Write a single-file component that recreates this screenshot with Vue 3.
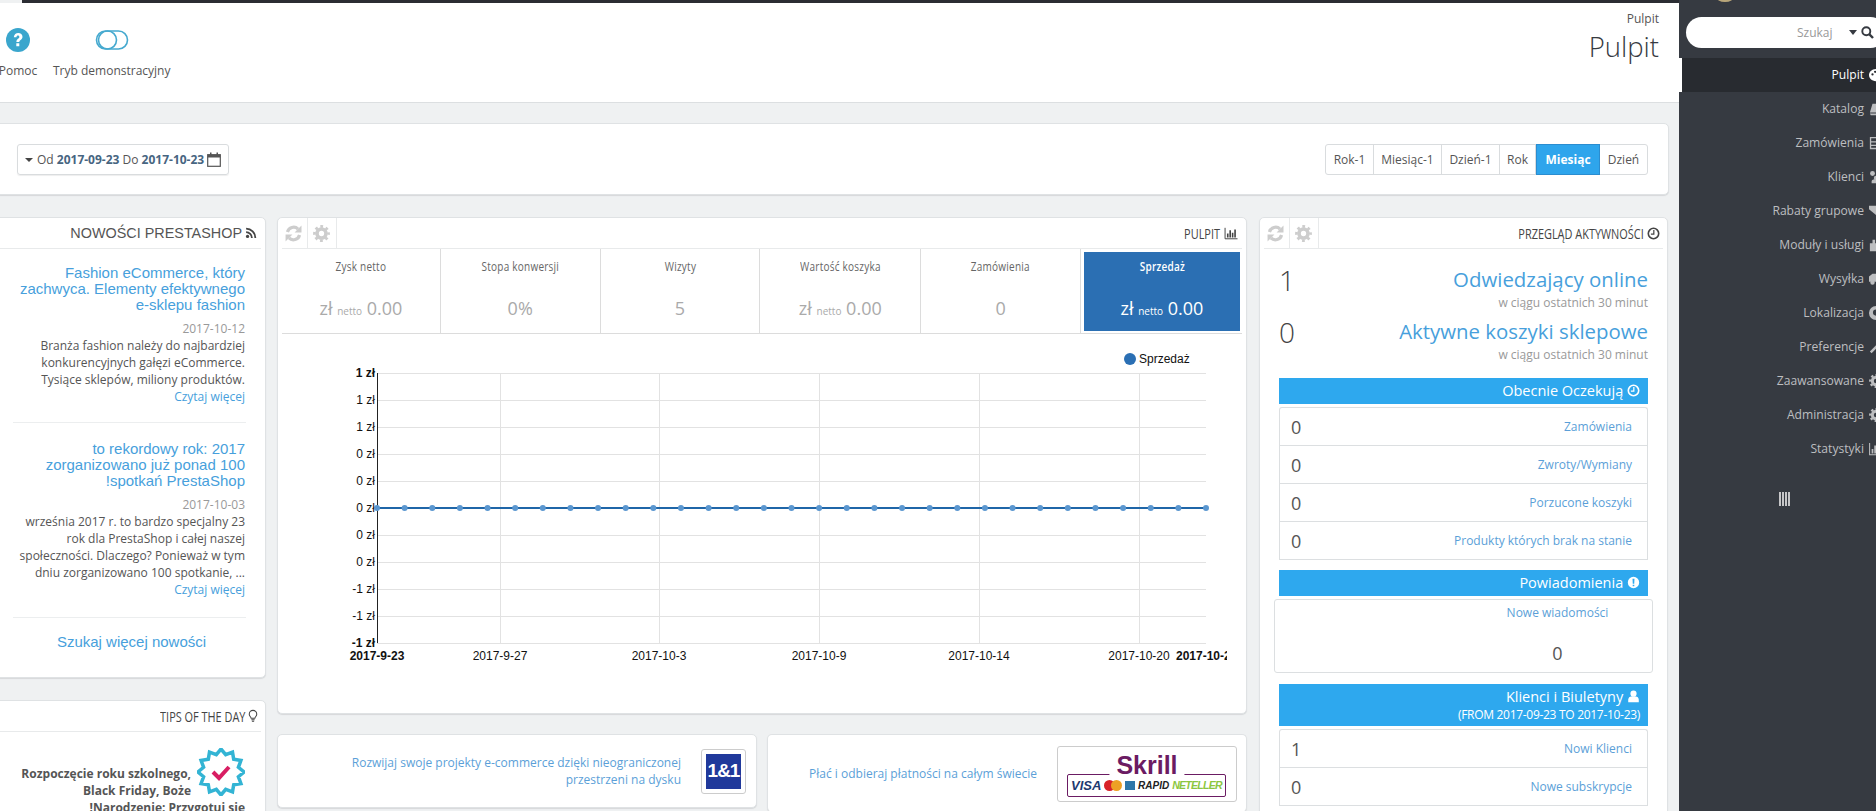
<script setup>
const menu = [
  ['Pulpit', 'i-palette', true], ['Katalog', 'i-book'], ['Zamówienia', 'i-inbox'], ['Klienci', 'i-users'],
  ['Rabaty grupowe', 'i-tag'], ['Moduły i usługi', 'i-puzzle'], ['Wysyłka', 'i-truck'], ['Lokalizacja', 'i-globe'],
  ['Preferencje', 'i-wrench'], ['Zaawansowane', 'i-cog'], ['Administracja', 'i-cog'], ['Statystyki', 'i-chart']
]
const ranges = [['Rok-1', 48], ['Miesiąc-1', 68], ['Dzień-1', 58], ['Rok', 36], ['Miesiąc', 64, true], ['Dzień', 47]]
const kpis = [
  { label: 'Zysk netto', money: true, w: 159 },
  { label: 'Stopa konwersji', value: '0%', w: 160 },
  { label: 'Wizyty', value: '5', w: 160 },
  { label: 'Wartość koszyka', money: true, w: 161 },
  { label: 'Zamówienia', value: '0', w: 160 },
  { label: 'Sprzedaż', money: true, active: true, w: 161 }
]
const pending = [['0', 'Zamówienia'], ['0', 'Zwroty/Wymiany'], ['0', 'Porzucone koszyki'], ['0', 'Produkty których brak na stanie']]
const customers = [['1', 'Nowi Klienci'], ['0', 'Nowe subskrypcje']]

const ox = 282
const oy = 333
const top = 372 - oy
const bottom = 642 - oy
const left = 377 - ox
const right = 1206 - ox
const yLabels = ['1 zł', '1 zł', '1 zł', '0 zł', '0 zł', '0 zł', '0 zł', '0 zł', '-1 zł', '-1 zł', '-1 zł'].map((t, i) => ({
  t, y: top + i * 27, bold: i === 0 || i === 10
}))
const xLabels = [
  { t: '2017-9-23', x: 377 - ox, bold: true },
  { t: '2017-9-27', x: 500 - ox },
  { t: '2017-10-3', x: 659 - ox },
  { t: '2017-10-9', x: 819 - ox },
  { t: '2017-10-14', x: 979 - ox },
  { t: '2017-10-20', x: 1139 - ox }
]
const vLines = [500, 659, 819, 979, 1139].map(x => x - ox)
const dots = Array.from({ length: 31 }, (_, i) => left + (i * (right - left)) / 30)

const star = Array.from({ length: 24 }, (_, i) => {
  const a = (i * Math.PI) / 12 - Math.PI / 2
  const r = i % 2 ? 18 : 23
  return `${(24 + r * Math.cos(a)).toFixed(1)},${(24 + r * Math.sin(a)).toFixed(1)}`
}).join(' ')
</script>

<template>
  <div class="app">
    <svg class="defs" width="0" height="0" aria-hidden="true">
      <symbol id="i-refresh" viewBox="0 0 16 16">
        <path d="M2.300 6.600A6 6 0 0 1 12.300 3.800" fill="none" stroke="currentColor" stroke-width="3" />
        <path d="M15.500 0.500V7H9z" fill="currentColor" />
        <path d="M13.700 9.400A6 6 0 0 1 3.700 12.200" fill="none" stroke="currentColor" stroke-width="3" />
        <path d="M.5 15.500V9H7z" fill="currentColor" />
      </symbol>
      <symbol id="i-gear" viewBox="0 0 16 16">
        <circle cx="8" cy="8" r="4.200" fill="none" stroke="currentColor" stroke-width="3.400" />
        <circle cx="8" cy="8" r="6.600" fill="none" stroke="currentColor" stroke-width="2.600" stroke-dasharray="2.600 2.580" stroke-dashoffset="1.300" />
      </symbol>
      <symbol id="i-clock" viewBox="0 0 16 16">
        <circle cx="8" cy="8" r="6.400" fill="none" stroke="currentColor" stroke-width="2" />
        <path d="M8.400 3.800V8.800H4.800" fill="none" stroke="currentColor" stroke-width="1.500" />
      </symbol>
      <symbol id="i-rss" viewBox="0 0 16 16">
        <circle cx="3.400" cy="12.600" r="2.200" fill="currentColor" />
        <path d="M1.500 6.800A7.800 7.800 0 0 1 9.200 14.600M1.500 2.200A12.400 12.400 0 0 1 13.800 14.600" fill="none" stroke="currentColor" stroke-width="2.400" />
      </symbol>
      <symbol id="i-chart" viewBox="0 0 16 16">
        <path d="M.7 1V14.500H16" fill="none" stroke="currentColor" stroke-width="1.200" />
        <path d="M3 8h2v5H3zM6 4h2v9H6zM9 7h2v6H9zM12 3h2v10h-2z" fill="currentColor" />
      </symbol>
      <symbol id="i-bulb" viewBox="0 0 16 16">
        <path d="M5.500 11C5 8.800 3 8 3 5.500A5 5 0 0 1 13 5.500C13 8 11 8.800 10.500 11z" fill="none" stroke="currentColor" stroke-width="1.400" />
        <path d="M5.800 12.200h4.400v1.300H5.800zM6.500 14.200h3v1.500h-3z" fill="currentColor" />
      </symbol>
      <symbol id="i-alert" viewBox="0 0 16 16">
        <path fill-rule="evenodd" d="M8 1a7 7 0 1 1 0 14A7 7 0 0 1 8 1zM6.800 3.500l.3 6h1.800l.3-6zM7 10.800v1.800h2v-1.800z" fill="currentColor" />
      </symbol>
      <symbol id="i-user" viewBox="0 0 16 16">
        <circle cx="8" cy="4.500" r="3.800" fill="currentColor" />
        <path d="M1.500 15V12C1.500 9.500 3.500 8 5 8H11C12.500 8 14.500 9.500 14.500 12V15z" fill="currentColor" />
      </symbol>
      <symbol id="i-palette" viewBox="0 0 16 16">
        <path fill-rule="evenodd" d="M8 1C3 1 0 4.500 0 8s3 7 8 7c2 0 1.500-2 1.500-3S11 10 13 10s3-.5 3-3c0-3-3.500-6-8-6zM4 6a1.300 1.300 0 1 1 0 2.600A1.300 1.300 0 0 1 4 6zm3-3a1.300 1.300 0 1 1 0 2.600A1.300 1.300 0 0 1 7 3z" fill="currentColor" />
      </symbol>
      <symbol id="i-book" viewBox="0 0 16 16"><path d="M4 2h11l-3 10H1zM1 13h11v2H2z" fill="currentColor" /></symbol>
      <symbol id="i-inbox" viewBox="0 0 16 16"><path fill-rule="evenodd" d="M1 1h14v14H1zM2.500 2.500V6h11V2.500zM2.500 7.500V10h11V7.500zM2.500 11.500v2h11v-2z" fill="currentColor" /></symbol>
      <symbol id="i-users" viewBox="0 0 16 16">
        <circle cx="4" cy="4" r="2.800" fill="currentColor" /><circle cx="11" cy="4.500" r="2.800" fill="currentColor" /><circle cx="8" cy="9" r="2.500" fill="currentColor" />
        <path d="M3 15v-2c0-2 2-2.500 5-2.500s5 .5 5 2.500v2z" fill="currentColor" />
      </symbol>
      <symbol id="i-tag" viewBox="0 0 16 16"><path d="M0 2h8l8 8-5 5-11-9z" fill="currentColor" /></symbol>
      <symbol id="i-puzzle" viewBox="0 0 16 16"><path d="M1 6h3V2h3v4h2V2h3v4h3v9H1z" fill="currentColor" /></symbol>
      <symbol id="i-truck" viewBox="0 0 16 16"><path d="M0 5l4-3h8v9H0z" fill="currentColor" /><circle cx="4" cy="12" r="2.500" fill="currentColor" /><circle cx="11" cy="12" r="2.500" fill="currentColor" /></symbol>
      <symbol id="i-globe" viewBox="0 0 16 16"><path fill-rule="evenodd" d="M8 0a8 8 0 1 1 0 16A8 8 0 0 1 8 0zm0 4a3.500 3.500 0 1 0 0 7 3.500 3.500 0 0 0 0-7z" fill="currentColor" /></symbol>
      <symbol id="i-wrench" viewBox="0 0 16 16"><path d="M1 13l7-7 2 2-7 7zM8 5l3-4 4 1-3 2 1 2 2-1-1 3-4 1z" fill="currentColor" /></symbol>
      <symbol id="i-cog" viewBox="0 0 16 16">
        <circle cx="8" cy="8" r="4.200" fill="none" stroke="currentColor" stroke-width="3.400" />
        <circle cx="8" cy="8" r="6.600" fill="none" stroke="currentColor" stroke-width="2.600" stroke-dasharray="2.600 2.580" stroke-dashoffset="1.300" />
      </symbol>
    </svg>

    <main class="main">
      <div class="topline"></div>
      <header class="page-head">
        <div class="head-tools">
          <div class="tool tool-help">
            <svg width="24" height="24" viewBox="0 0 24 24">
              <circle cx="12" cy="12" r="12" fill="#3aa6cd" />
              <path d="M7.800 9.200C8 6.500 10 5 12.200 5c2.500 0 4.300 1.600 4.300 3.800 0 3-3.200 3.200-3.200 5.200H10.400c0-3.300 3-3.400 3-5 0-.9-.6-1.500-1.400-1.500-1 0-1.400.7-1.600 1.700zM10.300 15.200h3v3h-3z" fill="#fff" />
            </svg>
            <span>Pomoc</span>
          </div>
          <div class="tool">
            <svg width="34" height="24" viewBox="0 0 34 24">
              <rect x="1.500" y="3" width="31" height="18" rx="9" fill="none" stroke="#45a9cf" stroke-width="1.600" />
              <circle cx="12.500" cy="12" r="9" fill="none" stroke="#45a9cf" stroke-width="1.600" />
            </svg>
            <span>Tryb demonstracyjny</span>
          </div>
        </div>
        <div class="head-title">
          <div class="crumb">Pulpit</div>
          <h1>Pulpit</h1>
        </div>
      </header>

      <section class="panel toolbar">
        <div class="date-btn">
          <span class="caret"></span>
          <span>Od <b>2017-09-23</b> Do <b>2017-10-23</b></span>
          <svg width="14" height="15" viewBox="0 0 14 15">
            <rect x=".7" y="2.700" width="12.600" height="11.600" fill="none" stroke="#555" stroke-width="1.200" />
            <path d="M.7 2.700h12.600v2.800H.7zM3 .5h1.500v3H3zM9.500 .5H11v3H9.500z" fill="#555" />
          </svg>
        </div>
        <div class="range">
          <span v-for="r in ranges" :key="r[0]" class="range-item" :class="{ on: r[2] }" :style="{ width: r[1] + 'px' }">{{ r[0] }}</span>
        </div>
      </section>

      <div class="columns">
        <div class="col-left">
          <section class="panel news">
            <div class="panel-head head-arial">
              <span>NOWOŚCI PRESTASHOP</span>
              <svg class="hi" width="12" height="12"><use href="#i-rss" /></svg>
            </div>
            <article class="story">
              <h4>Fashion eCommerce, który<br />zachwyca. Elementy efektywnego<br />e-sklepu fashion</h4>
              <div class="story-date">2017-10-12</div>
              <p>Branża fashion należy do najbardziej<br />konkurencyjnych gałęzi eCommerce.<br />Tysiące sklepów, miliony produktów.</p>
              <a class="more">Czytaj więcej</a>
            </article>
            <article class="story">
              <h4>to rekordowy rok: 2017<br />zorganizowano już ponad 100<br />!spotkań PrestaShop</h4>
              <div class="story-date">2017-10-03</div>
              <p>września 2017 r. to bardzo specjalny 23<br />rok dla PrestaShop i całej naszej<br />społeczności. Dlaczego? Ponieważ w tym<br />dniu zorganizowano 100 spotkanie, ...</p>
              <a class="more">Czytaj więcej</a>
            </article>
            <a class="more-news">Szukaj więcej nowości</a>
          </section>

          <section class="panel tips">
            <div class="panel-head tips-head">
              <span class="cond">TIPS OF THE DAY</span>
              <svg class="hi tight" width="12" height="14"><use href="#i-bulb" /></svg>
            </div>
            <div class="tip-body">
              <svg class="badge" width="48" height="48" viewBox="0 0 48 48">
                <polygon :points="star" fill="#fff" stroke="#33b4d4" stroke-width="3.500" />
                <path d="M16 24l6 6 10-11" fill="none" stroke="#d81e63" stroke-width="4" />
              </svg>
              <p>Rozpoczęcie roku szkolnego,<br />Black Friday, Boże<br />!Narodzenie: Przygotuj się</p>
            </div>
          </section>
        </div>

        <div class="col-center">
          <section class="panel dash">
            <div class="panel-head with-tools">
              <span class="head-btn"><svg width="17" height="17"><use href="#i-refresh" /></svg></span>
              <span class="head-btn wide"><svg width="17" height="17"><use href="#i-gear" /></svg></span>
              <span class="head-space"></span>
              <span class="cond">PULPIT</span>
              <svg class="hi" width="16" height="13"><use href="#i-chart" /></svg>
            </div>
            <div class="kpis">
              <div v-for="k in kpis" :key="k.label" class="kpi" :class="{ active: k.active }" :style="{ width: k.w + 'px' }">
                <div class="kpi-label"><span class="cond-c">{{ k.label }}</span></div>
                <div class="kpi-value">
                  <template v-if="k.money">zł <small>netto</small> 0.00</template>
                  <template v-else>{{ k.value }}</template>
                </div>
              </div>
            </div>
            <svg class="chart" width="945" height="360" viewBox="0 0 945 360">
              <g stroke="#e2e2e2" stroke-width="1">
                <line v-for="l in yLabels" :key="l.y" :x1="left" :x2="right" :y1="l.y + .5" :y2="l.y + .5" />
                <line v-for="x in vLines" :key="x" :x1="x + .5" :x2="x + .5" :y1="top" :y2="bottom" />
              </g>
              <line :x1="left + .5" :x2="left + .5" :y1="top" :y2="bottom" stroke="#222" />
              <text v-for="(l, i) in yLabels" :key="'y' + i" class="axis" :class="{ bold: l.bold }" x="93" :y="l.y + 4" text-anchor="end">{{ l.t }}</text>
              <text v-for="l in xLabels" :key="l.t" class="axis" :class="{ bold: l.bold }" :x="l.x" :y="bottom + 17" text-anchor="middle">{{ l.t }}</text>
              <text class="axis bold" x="894" :y="bottom + 17">2017-10-23</text>
              <line :x1="left" :x2="right" :y1="(top + bottom) / 2" :y2="(top + bottom) / 2" stroke="#1f66a8" stroke-width="2" />
              <circle v-for="x in dots" :key="x" :cx="x" :cy="(top + bottom) / 2" r="3" fill="#5b97d0" />
              <circle cx="848" cy="25" r="6" fill="#2a6fb4" />
              <text class="axis" x="857" y="29">Sprzedaż</text>
            </svg>
          </section>

          <div class="promos">
            <section class="panel promo">
              <a>Rozwijaj swoje projekty e-commerce dzięki nieograniczonej<br />przestrzeni na dysku</a>
              <div class="logo-box"><span class="oneone">1&amp;1</span></div>
            </section>
            <section class="panel promo">
              <a>Płać i odbieraj płatności na całym świecie</a>
              <div class="skrill">
                <div class="skrill-name">Skrill</div>
                <div class="skrill-row">
                  <span class="s-visa">VISA</span>
                  <span class="s-mc"><i></i><i></i></span>
                  <span class="s-amex"></span>
                  <span class="s-rapid">RAPID</span>
                  <span class="s-net">NETELLER</span>
                </div>
              </div>
            </section>
          </div>
        </div>

        <div class="col-right">
          <section class="panel activity">
            <div class="panel-head with-tools">
              <span class="head-btn"><svg width="17" height="17"><use href="#i-refresh" /></svg></span>
              <span class="head-btn wide"><svg width="17" height="17"><use href="#i-gear" /></svg></span>
              <span class="head-space"></span>
              <span class="cond">PRZEGLĄD AKTYWNOŚCI</span>
              <svg class="hi" width="13" height="13"><use href="#i-clock" /></svg>
            </div>
            <div class="activity-body">
              <div class="stat">
                <span class="stat-num">1</span>
                <div class="stat-text"><a>Odwiedzający online</a><small>w ciągu ostatnich 30 minut</small></div>
              </div>
              <div class="stat">
                <span class="stat-num">0</span>
                <div class="stat-text"><a>Aktywne koszyki sklepowe</a><small>w ciągu ostatnich 30 minut</small></div>
              </div>

              <div class="bar first-bar">Obecnie Oczekują <svg width="13" height="13"><use href="#i-clock" /></svg></div>
              <ul class="list">
                <li v-for="r in pending" :key="r[1]"><b>{{ r[0] }}</b><a>{{ r[1] }}</a></li>
              </ul>

              <div class="bar">Powiadomienia <svg width="13" height="13"><use href="#i-alert" /></svg></div>
              <div class="notice">
                <a>Nowe wiadomości</a>
                <b>0</b>
              </div>

              <div class="bar double">
                <div>Klienci i Biuletyny <svg width="13" height="13"><use href="#i-user" /></svg></div>
                <div class="bar-sub">(FROM 2017-09-23 TO 2017-10-23)</div>
              </div>
              <ul class="list">
                <li v-for="r in customers" :key="r[1]"><b>{{ r[0] }}</b><a>{{ r[1] }}</a></li>
              </ul>
            </div>
          </section>
        </div>
      </div>
    </main>

    <aside class="side">
      <i class="avatar"></i>
      <div class="search">
        <span class="search-label">Szukaj</span>
        <span class="caret dark"></span>
        <svg width="13" height="13" viewBox="0 0 13 13">
          <circle cx="5.300" cy="5.300" r="4" fill="none" stroke="#363a41" stroke-width="1.900" />
          <path d="M8.200 8.200L12 12" stroke="#363a41" stroke-width="2.400" />
        </svg>
      </div>
      <ul class="menu">
        <li v-for="m in menu" :key="m[0]" :class="{ active: m[2] }">
          <span>{{ m[0] }}</span>
          <svg width="14" height="14"><use :href="'#' + m[1]" /></svg>
        </li>
      </ul>
      <div class="collapse"><i></i><i></i><i></i><i></i></div>
    </aside>
  </div>
</template>

<style>
html, body { margin: 0; overflow: hidden; background: #eff1f2; }
</style>

<style scoped>
* { box-sizing: border-box; }
.app {
  display: flex; width: 1876px; height: 811px; overflow: hidden;
  font-family: "Open Sans", "Liberation Sans", sans-serif; font-size: 12px; color: #555;
  background: #eff1f2;
}
.defs { position: absolute; }
.main { width: 1679px; flex: none; display: flex; flex-direction: column; background: #eff1f2; }
.topline { height: 3px; margin-left: 22px; background: #2b2d33; flex: none; }
.page-head {
  height: 100px; flex: none; display: flex; justify-content: space-between; background: #fff;
  border-bottom: 1px solid #dcdfe1; padding: 25px 20px 0 0;
}
.head-tools { display: flex; gap: 17px; }
.tool { display: flex; flex-direction: column; align-items: center; gap: 10px; color: #555; }
.tool span { line-height: 18px; }
.tool-help { width: 36px; }
.head-title { margin-top: -18px; text-align: right; }
.crumb { line-height: 18px; color: #555; }
h1 { margin: 1px 0 0; font-size: 27.5px; line-height: 36px; font-weight: 300; color: #363a41; }

.panel { background: #fff; border: 1px solid #dfe2e4; border-radius: 5px; box-shadow: 0 1px 1px #d6d8da; }
.toolbar {
  flex: none; height: 72px; margin: 20px 10px 0 -5px; padding: 20px 20px 0 21px;
  display: flex; justify-content: space-between; align-items: flex-start;
}
.date-btn {
  width: 212px; height: 31px; display: flex; align-items: center; gap: 3px; padding-left: 7px;
  border: 1px solid #d9dcde; border-radius: 3px; color: #555; white-space: nowrap; box-shadow: 0 1px 1px #eee;
}
.date-btn b { color: #476581; font-weight: 700; }
.caret { width: 0; height: 0; border: 4px solid transparent; border-top: 4px solid #444; border-bottom: 0; margin-right: 1px; }
.range { display: flex; height: 31px; border: 1px solid #d9dcde; border-radius: 3px; }
.range-item { display: flex; align-items: center; justify-content: center; border-right: 1px solid #d9dcde; color: #555; }
.range-item:last-child { border-right: 0; }
.range-item.on { background: #2ea5ec; color: #fff; font-weight: 700; border: 1px solid #2b8dd0; margin: -1px 0; }

.columns { display: grid; grid-template-columns: 265px 970px 409px; gap: 12px; margin-top: 22px; flex: none; height: 594px; overflow: hidden; }
.col-left { margin-left: -5px; }
.panel-head {
  height: 31px; margin: 0 4px; display: flex; align-items: center; justify-content: flex-end;
  border-bottom: 1px solid #e8eaeb; color: #444; padding-right: 4px; font-size: 14px; white-space: nowrap;
}
.tips-head { padding-right: 2px; }
.head-arial { font-family: "Liberation Sans", Arial, sans-serif; color: #555; font-size: 14.4px; }
.hi { margin-left: 3px; color: #444; flex: none; }
.hi.tight { margin-left: 2px; }
.cond { display: inline-block; transform: scaleX(.78); transform-origin: right center; color: #444; }
.with-tools { padding-right: 3px; justify-content: flex-start; }
.head-space { flex: 1; }
.head-btn { width: 26px; height: 30px; display: flex; align-items: center; justify-content: center; border-right: 1px solid #e8eaeb; color: #cdcdcd; padding-right: 2px; }
.head-btn.wide { width: 29px; padding-right: 1px; }

.news { height: 461px; width: 271px; }
.story { margin: 0 19px 0 17px; padding: 16px 1px 0 0; height: 174px; text-align: right; border-bottom: 1px solid #eceeef; }
.story + .story { height: 195px; padding-top: 18px; }
.story h4 { margin: 0; font: 400 15px/16px "Liberation Sans", Arial, sans-serif; color: #479fdc; white-space: nowrap; }
.story-date { margin-top: 7px; line-height: 17px; color: #999; }
.story p { margin: 0; line-height: 17px; color: #555; white-space: nowrap; }
.more { display: block; line-height: 17px; color: #479fdc; }
.more-news { display: block; margin-top: 14px; padding-left: 8px; text-align: center; font: 400 15px/20px "Liberation Sans", Arial, sans-serif; color: #479fdc; width: 263px; }
.tips { margin-top: 22px; width: 271px; height: 130px; }
.tip-body { padding: 16px 20px 0 20px; text-align: right; }
.badge { float: right; margin-left: 6px; }
.tip-body p { margin: 0; padding-top: 17px; font-weight: 700; font-size: 12px; line-height: 17px; color: #555; white-space: nowrap; }

.dash { height: 497px; }
.kpis { height: 85px; margin: 0 4px; display: flex; border-bottom: 1px solid #dcdcdc; }
.kpi { text-align: center; border-right: 1px solid #dcdcdc; padding-top: 7px; color: #666; }
.kpi.active { background: #2b6fb3; color: #fff; border: 0; margin: 3px 2px 2px 3px; padding-top: 4px; width: 156px !important; flex: none; }
.kpi-label { height: 20px; line-height: 20px; }
.cond-c { display: inline-block; transform: scaleX(.77); font-size: 13px; white-space: nowrap; letter-spacing: .3px; }
.kpi-value { margin-top: 19px; font-size: 18px; line-height: 26px; color: #aaa; white-space: nowrap; }
.kpi-value small { font-size: 10px; }
.active .kpi-value { color: #fff; }
.active .cond-c { font-weight: 600; }
.chart { display: block; margin-left: 4px; }
.axis { font: 12px "Liberation Sans", Arial, sans-serif; fill: #111; }
.axis.bold { font-weight: 700; }

.promos { margin-top: 20px; display: grid; grid-template-columns: 480px 480px; gap: 10px; }
.promo { height: 75px; display: flex; align-items: center; justify-content: flex-end; text-align: right; color: #5b9fd8; line-height: 17px; }
.promo:first-child { padding-right: 10px; height: 74px; }
.promo:last-child { padding-right: 9px; height: 78px; border-bottom: 0; }
.logo-box { width: 45px; height: 45px; margin-left: 20px; border: 1px solid #ccc; border-radius: 3px; padding: 4px; }
.oneone { display: flex; align-items: center; justify-content: center; height: 100%; background: #20399b; color: #fff; font: 700 19px "Liberation Sans", Arial, sans-serif; letter-spacing: -1px; }
.skrill { width: 180px; height: 56px; margin-left: 20px; border: 1px solid #ccc; border-radius: 3px; position: relative; }
.skrill-name { position: absolute; top: 7px; left: 50%; transform: translateX(-50%); background: #fff; padding: 0 7px; z-index: 1; font: 700 25px/22px "Liberation Sans", Arial, sans-serif; color: #6b1b63; }
.skrill-row { position: absolute; left: 9px; right: 10px; top: 27px; height: 23px; border: 1px solid #6b1b63; border-radius: 2px; display: flex; align-items: center; justify-content: space-between; padding: 0 3px; white-space: nowrap; }
.s-visa { font: italic 700 13px "Liberation Sans", Arial, sans-serif; color: #1d3a70; }
.s-mc { display: flex; }
.s-mc i { width: 11px; height: 11px; border-radius: 50%; background: #d8232a; }
.s-mc i + i { background: #eda024; margin-left: -4px; }
.s-amex { width: 10px; height: 9px; background: #2e77aa; }
.s-rapid { font: italic 700 10px "Liberation Sans", Arial, sans-serif; color: #222; }
.s-net { font: italic 700 10.5px "Liberation Sans", Arial, sans-serif; color: #8cc63f; letter-spacing: -.7px; }

.activity { height: 620px; }
.activity-body { padding: 16px 19px 0; }
.stat { display: flex; justify-content: space-between; height: 52px; }
.stat-num { font-size: 28px; font-weight: 300; line-height: 30px; color: #444; }
.stat-text { text-align: right; }
.stat-text a { display: block; font-size: 20.4px; line-height: 28px; color: #479fdc; white-space: nowrap; }
.stat-text small { display: block; font-size: 12px; line-height: 17px; color: #999; margin-top: 1px; }
.bar { height: 26px; margin-top: 11px; background: #2ea8ee; color: #fff; text-align: right; padding-right: 8px; font-size: 14.5px; line-height: 25px; }
.bar svg { vertical-align: -1px; }
.first-bar { margin-top: 9px; }
.list + .bar { margin-top: 10px; }
.double { height: 42px; line-height: 22px; padding-top: 2px; }
.bar-sub { font-size: 12px; line-height: 14px; letter-spacing: -.3px; }
.list { list-style: none; margin: 3px 0 0; padding: 0; border: 1px solid #dcdfe1; border-bottom: 0; border-radius: 3px 3px 0 0; }
.list li { height: 38px; display: flex; align-items: center; justify-content: space-between; padding: 0 15px 0 11px; border-bottom: 1px solid #dcdfe1; }
.list b { font-size: 18px; font-weight: 400; color: #555; }
.list a { color: #5b9fd8; }
.notice { height: 74px; margin: 3px -5px 0; border: 1px solid #dcdfe1; border-radius: 3px; padding-left: 188px; display: flex; flex-direction: column; align-items: center; width: 379px; }
.notice a { margin-top: 4px; line-height: 17px; color: #5b9fd8; white-space: nowrap; }
.notice b { margin-top: 19px; font-size: 18px; font-weight: 400; line-height: 26px; color: #555; }

.side { position: relative; width: 197px; flex: none; background: #363a41; overflow: hidden; }
.avatar { position: absolute; left: 37px; top: -9px; width: 18px; height: 11px; border-radius: 50%; background: #b9a67a; }
.search { height: 31px; margin: 17px -10px 0 7px; border-radius: 16px; background: #fff; display: flex; align-items: center; padding-left: 111px; }
.search-label { color: #999; width: 37px; }
.search .caret { margin: 0 4px 0 15px; border-width: 5px 4px 0; }
.caret.dark { border-top-color: #363a41; }
.menu { list-style: none; margin: 10px 0 0; padding: 0; }
.menu li { height: 34px; display: flex; align-items: center; justify-content: flex-end; gap: 5px; color: #bdbec0; margin-right: -7px; white-space: nowrap; font-size: 12.1px; padding-bottom: 1px; }
.menu li.active { color: #fff; background: #282b30; border-left: 3px solid #fff; }
.menu svg { flex: none; }
.collapse { display: flex; gap: 1px; margin: 26px 0 0 100px; height: 14px; }
.collapse i { width: 2px; height: 14px; background: #c6c6c8; }
</style>
